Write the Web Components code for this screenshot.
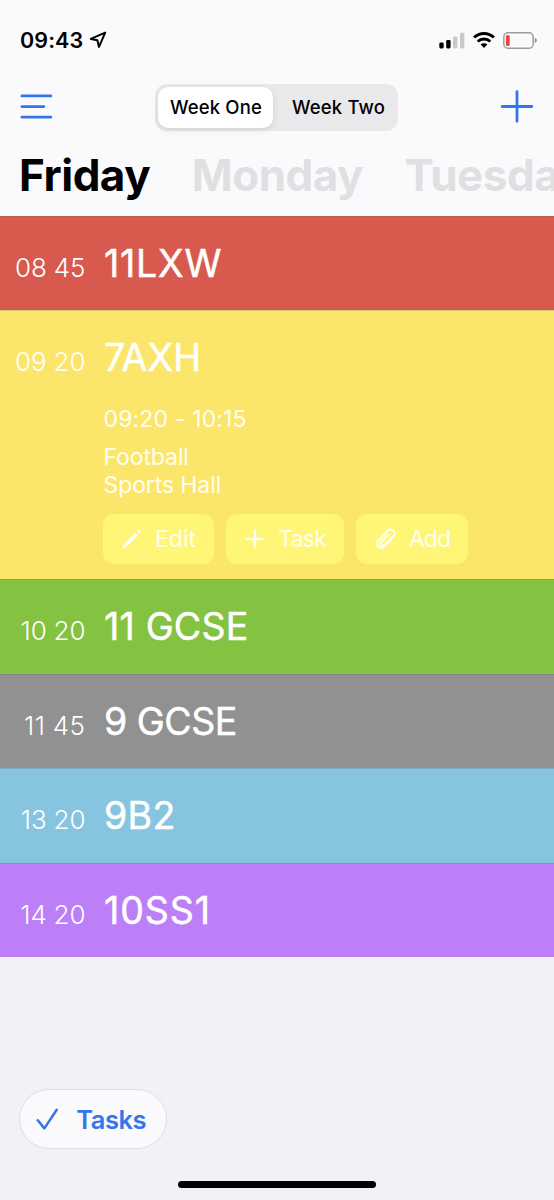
<!DOCTYPE html>
<html lang="en">
<head>
<meta charset="UTF-8">
<meta name="viewport" content="width=device-width, initial-scale=1.0">
<title>Timetable</title>
<style>
    body {
        margin: 0;
        font-family: Inter, "Liberation Sans", sans-serif;
        background: #f1f1f6;
    }
</style>
</head>
<body>
<timetable-app></timetable-app>
<script>
const LESSONS = [
    { time: '08 45', name: '11LXW', color: '#d85a4e', spacing: 0.8 },
    {
        time: '09 20', name: '7AXH', color: '#fbe66b', spacing: 0.2,
        period: '09:20 - 10:15', subject: 'Football', room: 'Sports Hall'
    },
    { time: '10 20', name: '11 GCSE', color: '#84c241', spacing: 0.2 },
    { time: '11 45', name: '9 GCSE', color: '#919191', spacing: -0.5, timeSpacing: 0.5 },
    { time: '13 20', name: '9B2', color: '#87c4df', spacing: 0.3 },
    { time: '14 20', name: '10SS1', color: '#bc7ff8', spacing: 0.9 }
]

const ICONS = {
    LOCATION: `<svg width="18" height="18" viewBox="0 0 18 18" fill="none" stroke="#000" stroke-width="2" stroke-linejoin="round">
        <path d="M16.2 1.6 1.8 7.9 8.4 9.2 10 15.9Z"/></svg>`,
    SIGNAL: `<svg width="26" height="17" viewBox="0 0 26 17">
        <rect x="0.3" y="10.6" width="4.4" height="5.8" rx="1.3"/>
        <rect x="7.2" y="8" width="4.4" height="8.4" rx="1.3"/>
        <rect x="14" y="4.4" width="4.4" height="12" rx="1.3" fill="#c9c9cc"/>
        <rect x="21" y="0.8" width="4.4" height="15.6" rx="1.3" fill="#c9c9cc"/></svg>`,
    WIFI: `<svg width="22" height="17" viewBox="0 0 22 17" fill="none" stroke="#000" stroke-width="2.8">
        <path d="M1.1 5.6A14 14 0 0 1 20.9 5.6"/>
        <path d="M4.7 9.6A8.9 8.9 0 0 1 17.3 9.6"/>
        <path d="M7.6 12.5A4.9 4.9 0 0 1 14.4 12.5L11 16Z" fill="#000" stroke="none"/></svg>`,
    BATTERY: `<svg width="35" height="17" viewBox="0 0 35 17">
        <rect x="0.8" y="0.8" width="29.4" height="15.4" rx="4.2" fill="none" stroke="#9c9c9f" stroke-width="1.4"/>
        <rect x="2.9" y="2.9" width="3.8" height="11.2" rx="1.6" fill="#f0443a"/>
        <path d="M31.7 5.8Q34 6.6 34 8.5T31.7 11.2Z" fill="#9c9c9f"/></svg>`,
    MENU: `<svg width="35" height="26" viewBox="0 0 35 26" fill="none" stroke="#3575ec" stroke-width="2.8" stroke-linecap="round">
        <path d="M3.9 1.9H32.9M3.9 12.6H25.9M3.9 23.1H32.9"/></svg>`,
    PLUS: `<svg width="34" height="34" viewBox="0 0 34 34" fill="none" stroke="#3575ec" stroke-width="2.8" stroke-linecap="round">
        <path d="M17 1.7V31.3M2.2 16.5H31.8"/></svg>`,
    CHECK: `<svg width="22" height="22" viewBox="0 0 22 22" fill="none" stroke="#3575ec" stroke-width="2.5" stroke-linecap="round" stroke-linejoin="round">
        <path d="M1.8 12.2 8.4 20.4 20.7 1.7"/></svg>`,
    EDIT: `<svg width="20" height="20" viewBox="0 0 20 20" fill="currentColor">
        <path d="M13.2 3.4 16.2 6.4 4.4 18 .4 19.4 1.7 15.1Z"/><path d="M14.7 2.2 16 .9Q17 .1 18.1 1.2T18.7 3.4L17.4 4.9Z"/></svg>`,
    TASK: `<svg width="20" height="20" viewBox="0 0 20 20" fill="none" stroke="currentColor" stroke-width="2.6" stroke-linecap="round">
        <path d="M10 1.8V18.2M1.8 10H18.2"/></svg>`,
    CLIP: `<svg width="22" height="24" viewBox="0 0 22 24" fill="none" stroke="currentColor" stroke-width="2.1" stroke-linecap="round" stroke-linejoin="round">
        <path d="M16.8 11.6 9.4 19.4C5.2 23.6-.8 18.1 3 13.8L12.4 4C16.5.2 22 5 18.6 9L9.5 18.1C7 20.3 4 17.4 6.2 15L13.6 7.5"/></svg>`
}

class BaseElement extends HTMLElement {
    constructor() {
        super()
        this.attachShadow({ mode: 'open' })
    }

    connectedCallback() {
        this.shadowRoot.innerHTML = `<style>
            * { box-sizing: border-box; }
            svg { display: block; flex: none; }
            button { all: unset; box-sizing: border-box; cursor: pointer; }
            ${this.styles()}
        </style>${this.render()}`
    }
}

class StatusBar extends BaseElement {
    styles() {
        return `
            :host { display: flex; height: 80px; padding: 0 16px 0 20px; align-items: center; justify-content: space-between; }
            div { display: flex; align-items: center; }
            .clock { gap: 5.5px; font-size: 21.5px; font-weight: 600; letter-spacing: 0.1px; }
            .icons { gap: 8px; }`
    }

    render() {
        return `<div class="clock"><span>09:43</span>${ICONS.LOCATION}</div>
            <div class="icons">${ICONS.SIGNAL}${ICONS.WIFI}${ICONS.BATTERY}</div>`
    }
}

class WeekSwitch extends BaseElement {
    styles() {
        return `
            :host { display: flex; width: 243px; height: 47px; padding: 3px; border-radius: 12px; background: #e9e9eb; }
            button { flex: 1; padding-left: 9px; text-align: center; line-height: 41px; font-size: 18.5px; font-weight: 500; letter-spacing: 0.15px; white-space: nowrap; }
            .active { flex: none; width: 115px; padding: 0 0 0 1px; background: #fff; border-radius: 10px; box-shadow: 0 2px 6px rgba(0,0,0,0.1); }`
    }

    render() {
        return `<button class="active">Week One</button><button>Week Two</button>`
    }
}

class NavBar extends BaseElement {
    styles() {
        return `
            :host { display: flex; height: 54px; padding: 0 20px 0 18px; align-items: center; justify-content: space-between; }
            slot { display: block; }`
    }

    render() {
        return `<button>${ICONS.MENU}</button><slot></slot><button>${ICONS.PLUS}</button>`
    }
}

class DayTabs extends BaseElement {
    styles() {
        return `
            :host { display: flex; height: 81.5px; padding: 0 0 0 19px; gap: 41.5px; overflow: hidden; font-size: 44px; font-weight: 700; letter-spacing: -0.5px; line-height: 82px; color: #e0e0e2; white-space: nowrap; }
            span { flex: none; }
            .active { color: #000; }`
    }

    render() {
        return `<span class="active">Friday</span><span>Monday</span><span>Tuesday</span>`
    }
}

class ActionButton extends BaseElement {
    styles() {
        return `
            :host { display: block; }
            button { display: flex; width: 100%; height: 50px; padding: 0 18px 0 19px; align-items: center; justify-content: space-between; border-radius: 11px; background: #fff576; color: #fffef0; font-size: 23px; }`
    }

    render() {
        return `<button>${ICONS[this.getAttribute('icon')]}<slot></slot></button>`
    }
}

class LessonRow extends BaseElement {
    set lesson(value) {
        this.data = value
    }

    styles() {
        return `
            :host { display: block; background: ${this.data.color}; color: #fff; box-shadow: inset 0 1px rgba(100,100,100,0.22); }
            header { display: flex; height: 94.5px; align-items: baseline; line-height: 95px; }
            time { width: 85.5px; flex: none; text-align: right; font-size: 26px; font-weight: 300; letter-spacing: ${this.data.timeSpacing || 0}px; word-spacing: -0.6px; }
            h2 { margin: 0 0 0 18.5px; font-size: 37.5px; font-weight: 400; letter-spacing: ${this.data.spacing}px; -webkit-text-stroke: 0.5px #fff; }
            section { padding: 0 0 0 103.5px; height: 174.5px; font-size: 23px; line-height: 28px; color: #fffef0; }
            p { margin: 0; letter-spacing: -0.1px; }
            .period { margin-bottom: 10px; letter-spacing: 0.15px; }
            .actions { display: flex; gap: 12px; margin: 15px 0 0 -0.5px; }`
    }

    render() {
        const { time, name, period, subject, room } = this.data
        const details = period ? `<section>
                <p class="period">${period}</p>
                <p>${subject}</p>
                <p>${room}</p>
                <div class="actions">
                    <action-button icon="EDIT" style="width: 111px">Edit</action-button>
                    <action-button icon="TASK" style="width: 118px; letter-spacing: -0.8px">Task</action-button>
                    <action-button icon="CLIP" style="width: 112px; letter-spacing: -1px">Add</action-button>
                </div>
            </section>` : ''
        return `<header><time>${time}</time><h2>${name}</h2></header>${details}`
    }
}

class TasksButton extends BaseElement {
    styles() {
        return `
            :host { display: block; }
            button { display: flex; width: 148px; height: 60px; padding: 0 20px 0 16px; align-items: center; justify-content: space-between; border: 1px solid #dedee1; border-radius: 30px; background: #fafafc; color: #3575ec; font-size: 25.5px; font-weight: 600; letter-spacing: -0.5px; }`
    }

    render() {
        return `<button>${ICONS.CHECK}<slot></slot></button>`
    }
}

class TimetableApp extends BaseElement {
    styles() {
        return `
            :host { display: flex; flex-direction: column; height: 1200px; overflow: hidden; }
            .top { background: #fafafd; }
            footer { margin-top: auto; padding: 0 0 12px 19px; }
            .home { width: 198px; height: 7px; margin: 32px 0 0 159px; border-radius: 4px; background: #000; }`
    }

    render() {
        return `<div class="top">
                <status-bar></status-bar>
                <nav-bar><week-switch></week-switch></nav-bar>
                <day-tabs></day-tabs>
            </div>
            <main></main>
            <footer>
                <tasks-button>Tasks</tasks-button>
                <div class="home"></div>
            </footer>`
    }

    connectedCallback() {
        super.connectedCallback()
        const mainEl = this.shadowRoot.querySelector('main')
        LESSONS.forEach(lesson => {
            const rowEl = document.createElement('lesson-row')
            rowEl.lesson = lesson
            mainEl.appendChild(rowEl)
        })
    }
}

customElements.define('status-bar', StatusBar)
customElements.define('week-switch', WeekSwitch)
customElements.define('nav-bar', NavBar)
customElements.define('day-tabs', DayTabs)
customElements.define('action-button', ActionButton)
customElements.define('lesson-row', LessonRow)
customElements.define('tasks-button', TasksButton)
customElements.define('timetable-app', TimetableApp)
</script>
</body>
</html>
